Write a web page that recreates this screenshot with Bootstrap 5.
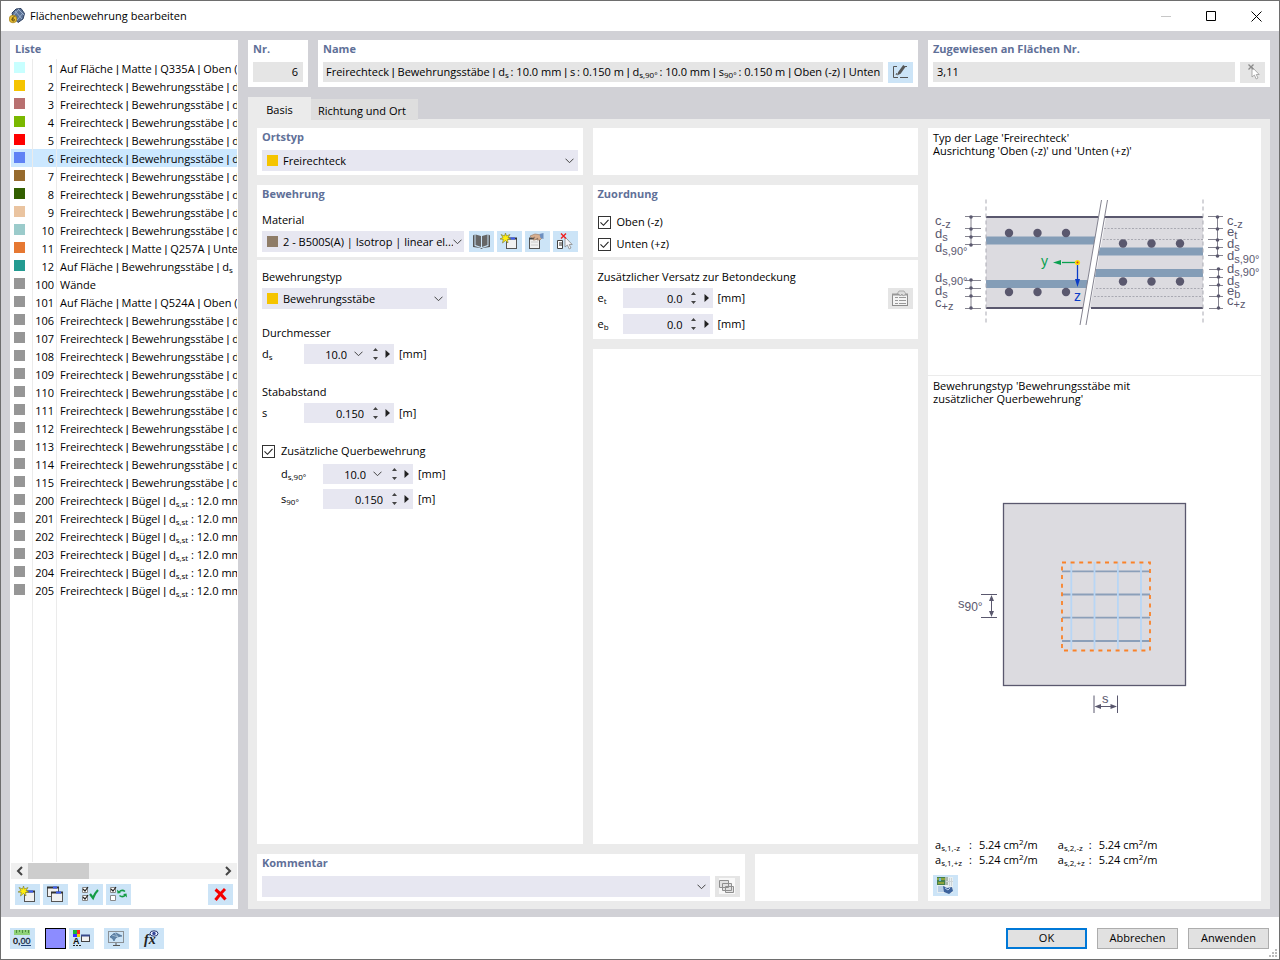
<!DOCTYPE html>
<html lang="de">
<head>
<meta charset="utf-8">
<meta name="viewport" content="width=device-width, initial-scale=1">
<title>Flächenbewehrung bearbeiten</title>
<link href="https://cdn.jsdelivr.net/npm/bootstrap@5.3.0/dist/css/bootstrap.min.css" rel="stylesheet">
<style>
:root { --field: #e7e7f1; --gray: #e5e5e5; --frame: #d1d1d6; --page: #ebebeb; --tool: #cce4f7; --head: #5f7098; }
body { font: 11px/16px "Open Sans", "Noto Sans", sans-serif; color: #000; background: #fff; }
.dialog { min-height: 100vh; border: 1px solid #6e6e6e; }
.titlebar { height: 30px; gap: 5px; }
.titlebar .btn { width: 45px; height: 30px; }
.titlebar .btn + .btn { margin-left: -5px; }
.workspace { background: var(--frame); padding: 9px 9px 8px; gap: 10px; min-height: 0; }
.list-pane { width: 228px; flex: none; }
.pane { background: #fff; padding: 1px 5px 4px; }
.pane-form { padding-bottom: 5px; }
.pane-sub { background: #fff; padding: 9px 5px 5px; }
.heading { font-size: 11px; line-height: 16px; font-weight: 700; color: var(--head); margin: 0; }
.caption { font-size: 11px; line-height: 16px; font-weight: 400; margin-bottom: 3px; }
.btn { border-radius: 0; padding: 0; border: 0; font-size: 11px; line-height: 16px; }
.tool { width: 25px; height: 21px; background: var(--tool); flex: none; display: block; }
.tool:disabled { background: var(--gray); opacity: 1; border: 0; }
.tool svg, .titlebar .btn svg { display: block; margin: auto; }
.gray-field { background: var(--gray); border: 0; height: 20px; line-height: 20px; min-width: 0; overflow: hidden; white-space: nowrap; }
sub { font-size: 8px; bottom: -2px; line-height: 0; }
sup { font-size: 8px; line-height: 0; }
.pipe { font-family: "Liberation Sans", sans-serif; }

.items { width: 100%; height: 100%; table-layout: fixed; border-collapse: separate; border-spacing: 0; }
.items td { height: 18px; padding: 0; line-height: 16px; vertical-align: bottom; white-space: nowrap; overflow: hidden; border-right: 1px solid #ebebeb; }
.items td:last-child { border: 0; padding-left: 3px; }
.items td:nth-child(2) { text-align: right; padding-right: 2px; }
.items .filler td { height: auto; }
.items .chosen td { background: #cce8ff; }
.dot { display: block; width: 11px; height: 11px; margin: 0 0 4px 3px; }
.c-dot { width: 22px; } .c-no { width: 24px; }
.list-pane .heading { padding: 1px 5px 2px; }
.list-body { margin: 0 1px; }
.list-tools { gap: 3px; padding: 5px 5px 4px; }
.list-tools .second { margin-left: 7px; }
.scroller { height: 16px; margin: 1px 1px 0; background: #f0f0f0; }
.scroller .btn { width: 17px; height: 16px; }
.thumb { width: 61px; background: #cdcdcd; }

.tabs { height: 22px; }
.tabs .nav-link { position: relative; z-index: 1; border: 0; border-radius: 0; padding: 2px 9px 0 7px; height: 21px; margin-top: 2px; background: #dedede; color: #000; line-height: 16px; min-width: 107px; text-align: left; }
.tabs .nav-link.active { background: var(--page); padding: 4px 0 0; width: 63px; min-width: 0; text-align: center; height: 22px; margin-top: 0; }
.sheet { background: var(--page); padding: 9px 9px 8px; gap: 10px; min-height: 0; }
.side-top { width: 342px; flex: none; }
.side { width: 333px; flex: none; background: #fff; }
.split { display: grid; grid-template-columns: minmax(0, 1fr) minmax(0, 1fr); gap: 10px; }
.split-foot { display: grid; grid-template-columns: minmax(0, 3fr) minmax(0, 1fr); gap: 10px; }
.g-s { gap: 3px; } .g-m { gap: 5px; } .g-n { gap: 6px; } .g-l { gap: 10px; }
.below-s { margin-bottom: 3px; } .below-m { margin-bottom: 5px; } .below-l { margin-bottom: 10px; } .below-xl { margin-bottom: 12px; }
.above-m { margin-top: 5px; } .above-l { margin-top: 16px; } .above-xl { margin-top: 20px; }
.pad-x { padding-left: 5px; padding-right: 5px; }

.combo { background: var(--field); height: 21px; padding-left: 5px; gap: 5px; min-width: 0; }
.combo i { width: 11px; height: 11px; flex: none; }
.combo select { appearance: none; border: 0; background: transparent url("data:image/svg+xml,%3Csvg xmlns='http://www.w3.org/2000/svg' width='9' height='6'%3E%3Cpath d='M.5.7l4 4 4-4' fill='none' stroke='%23444'/%3E%3C/svg%3E") no-repeat right 4px center; flex: 1 1 0; min-width: 0; height: 21px; padding: 0 11px 0 0; color: #000; }
.mat-combo select { background-position: right 2px center; }
.c-yellow { background: #f5c400; } .c-brown { background: #8f7d68; }
.nr-pane { width: 60px; flex: none; } .name-field { padding-left: 3px; } .type-combo { width: 185px; } .mat-combo { margin-right: 2px; }
.number { background: var(--field); width: 90px; height: 20px; flex: none; padding-right: 1px; }
.number input { flex: 1 1 0; min-width: 0; border: 0; background: none; text-align: right; padding: 1px 0 0; height: 20px; }
.number button { border: 0; background: none; padding: 0; height: 20px; display: block; }
.number svg { display: block; margin: auto; }
.number .drop { width: 16px; margin: 0 2px 0 3px; }
.number .spin { width: 14px; margin-left: 4px; }
.number .drop + .spin { margin-left: 0; }
.number .more { width: 11px; }
.wide-label { width: 42px; } .slim-label { width: 25px; }
.indent { padding-left: 19px; }
.check-row { gap: 6px; height: 16px; }
.form-check-input.box { width: 13px; height: 13px; margin: 0; border: 1px solid #333; border-radius: 0; background: #fff; box-shadow: none; }
.form-check-input.box:checked { background: #fff url("data:image/svg+xml,%3Csvg xmlns='http://www.w3.org/2000/svg' viewBox='0 0 11 11'%3E%3Cpath d='M1.5 5.3l3 3 5-5.5' fill='none' stroke='%23222' stroke-width='1.1'/%3E%3C/svg%3E") center/11px; }
.note { line-height: 13px; padding: 3px 5px 0; margin: 0; }
.upper { min-height: 248px; border-bottom: 1px solid #ebebeb; }
.figure-box { flex: 1 1 0; min-height: 0; }
.figure-box svg { display: block; flex: none; }
.side-foot { padding: 0 5px 5px; }
.results { line-height: 15px; width: auto; margin-bottom: 8px; }
.results td, .results th { padding: 0 7px 0 0; font-weight: 400; }
.results th { min-width: 36px; padding-left: 2px; padding-right: 4px; }
.results td + th { padding-left: 13px; }
.footer-bar { min-height: 42px; padding: 0 10px 0 9px; }
.color-box { width: 21px; height: 21px; border: 1px solid #000; background: #8c8cff; padding: 0; }
.action { width: 81px; height: 21px; background: #e1e1e1; border: 1px solid #adadad; color: #000; }
.action.default { border: 2px solid #0078d7; }
.grip { position: absolute; right: 2px; bottom: 2px; }
</style>
</head>
<body>
<svg width="0" height="0" class="position-absolute" aria-hidden="true">
  <symbol id="i-new" viewBox="0 0 25 21">
    <rect x="9.500" y="7.500" width="10" height="10" fill="#f1f1f1" stroke="#555"/><path d="M9 7.500h11" stroke="#333" stroke-width="2"/><path d="M13 7.500h5" stroke="#3c5cf0" stroke-width="2"/>
    <path d="M8.500 2l1 3 3.500-1.500-2 3 3 1.500-3.500.5.5 3.500-2.500-2.500-3 2.500.8-3.600L3 8l3-1.500L4 3.500 7.500 5z" fill="#ffee10" stroke="#77752a" stroke-width=".6"/>
  </symbol>
  <symbol id="i-copy" viewBox="0 0 25 21">
    <rect x="4.500" y="3.500" width="11" height="9" fill="#f1f1f1" stroke="#555"/><path d="M4 3.500h12" stroke="#333" stroke-width="2"/><path d="M10 3.500h4" stroke="#3c5cf0" stroke-width="2"/>
    <rect x="8.500" y="8.500" width="11" height="9" fill="#f1f1f1" stroke="#555"/><path d="M8 8.500h12" stroke="#333" stroke-width="2"/><path d="M13 8.500h5" stroke="#3c5cf0" stroke-width="2"/>
  </symbol>
  <symbol id="i-allcheck" viewBox="0 0 25 21">
    <path d="M4.500 3.500h5v5h-5zM4.500 11.500h5v5h-5z" fill="#fff" stroke="#888"/><path d="M5 5l2 2 3-4M5 13l2 2 3-4" fill="none" stroke="#222" stroke-width="1.200"/>
    <path d="M12 10l3 4q2-5 5-8" fill="none" stroke="#159c45" stroke-width="2.200"/>
  </symbol>
  <symbol id="i-swap" viewBox="0 0 25 21">
    <path d="M4.500 3.500h5v5h-5zM4.500 11.500h5v5h-5z" fill="#fff" stroke="#888"/><path d="M5 5l2 2 3-4" fill="none" stroke="#222" stroke-width="1.200"/>
    <path d="M13 8q3-3 6-.5M19.500 11q-3 3-6 .5" fill="none" stroke="#159c45" stroke-width="1.600"/><path d="M11 5.500l.5 4 3.500-.5zM21 13.500l-.5-4-3.500.5z" fill="#159c45"/>
  </symbol>
  <symbol id="i-delete" viewBox="0 0 25 21"><path d="M7.500 5.500q5 4 10 10M17 5q-5 5-9.500 11" fill="none" stroke="#f50000" stroke-width="3"/></symbol>
  <symbol id="i-book" viewBox="0 0 25 21">
    <path d="M4 4.500l1.500-1v11.500L12 17h1l6.500-2V3.500l1.500 1V16l-7 1-1.500 1L11 17l-7-1z" fill="#555"/><path d="M6.500 3.500l5.500 1.500v11l-5.500-2zM18.500 3.500L13 5v11l5.500-2z" fill="#666"/><path d="M12.500 4v13" stroke="#cce4f7"/>
  </symbol>
  <symbol id="i-edit" viewBox="0 0 25 21">
    <rect x="4.500" y="7.500" width="10" height="10" fill="#f1f1f1" stroke="#555"/><path d="M4 7.500h11" stroke="#444" stroke-width="2"/><path d="M5 5l5-2 6 1 1 3-2 2h-3l1-2-3 2H8l2-3-3 1z" fill="#d8af90" stroke="#96755f" stroke-width=".6"/><path d="M14.500 3l4-1v6l-3-1z" fill="#6c8fc0"/><path d="M6 11h7M6 14h7" stroke="#ccc"/>
  </symbol>
  <symbol id="i-edit-off" viewBox="0 0 25 21">
    <rect x="4.500" y="6.500" width="15" height="11" fill="#f4f4f4" stroke="#8d8d8d"/><path d="M4 6.500h16" stroke="#999" stroke-width="2"/><path d="M7 9.500h3M11 9.500h7M7 12.500h3M11 12.500h7M7 15.500h3M11 15.500h7" stroke="#999"/><path d="M9 6l2-3 5 0 2 3-3 2-1-2-2 2-1-2z" fill="#ddd" stroke="#999" stroke-width=".7"/>
  </symbol>
  <symbol id="i-pick" viewBox="0 0 25 21">
    <path d="M4.500 9.500h5v8h-5z" fill="#fff" stroke="#444"/><path d="M6 12h3M6 14h3" stroke="#333"/><path d="M12 6v10l2.400-2 1.800 4 1.800-1-1.800-3.500h3z" fill="#f6f6fa" stroke="#888" stroke-width=".8"/><path d="M8 2.500l5 5M13 2.500l-5 5" stroke="#ef2020" stroke-width="1.400"/>
  </symbol>
  <symbol id="i-pick-off" viewBox="0 0 25 21">
    <path d="M12 5v10l2.400-2 1.800 4 1.800-1-1.800-3.500h3z" fill="#fff" stroke="#999" stroke-width=".8"/><path d="M8.500 2.500l5 5M13.500 2.500l-5 5" stroke="#8a8a8a" stroke-width="1.300"/>
  </symbol>
  <symbol id="i-pencil" viewBox="0 0 25 21">
    <path d="M9 4.500H5.500v11H10M12 15.500h8M17 4.500h2M8 13l1-2" fill="none" stroke="#555"/><path d="M9 13.500l1.200-3.500 5-7 2.400 1.700-5 7z" fill="#555"/>
  </symbol>
  <symbol id="i-cards" viewBox="0 0 25 21">
    <rect x="4" y="2" width="16" height="16" fill="#f8f8f8"/><path d="M4.500 4.500h9v7h-9zM7.500 7.500h9v7h-9zM10.500 10.500h8v6h-8z" fill="#e2e2e2" stroke="#8f8f8f"/>
  </symbol>
  <symbol id="i-picture" viewBox="0 0 25 21">
    <path d="M4 2h16v16H4z" fill="#e6eef2"/><path d="M4 2h8v8H4z" fill="#45804a"/><path d="M4 4h8M5 8h6" stroke="#d7c82e"/><path d="M7 3v3" stroke="#75b8df" stroke-width="2"/><path d="M12 2h3v8h-3z" fill="#a9b9ae"/><path d="M16.500 3v8M18.500 3v8M13 6.500h7" stroke="#cdd4d6"/><path d="M5 11h7v6H5z" fill="#b7cee6"/><path d="M10 11l4 2 5-1 1 4-4 3-5-2z" fill="#3c629c"/><path d="M12 13l3 2 2-2" stroke="#b8cce8" fill="none"/>
  </symbol>
  <symbol id="i-display" viewBox="0 0 25 21">
    <rect x="4.500" y="3.500" width="15" height="11" fill="none" stroke="#8a9096"/><path d="M12 15v3M9 17.500h7" stroke="#555"/><path d="M6 9q3-4 6-4l6 3-5 1q-2 1-3 4-1-3-4-4z" fill="#5f84a9" stroke="#3e6288" stroke-width=".6"/><path d="M8 7l6 2M11 5l3 4" stroke="#b8cde0" stroke-width=".7"/>
  </symbol>
  <symbol id="s-drop" viewBox="0 0 9 6"><path d="M.5.7l4 4 4-4" fill="none" stroke="#444"/></symbol>
  <symbol id="s-spin" viewBox="0 0 5 14"><path d="M0 4l2.500-3L5 4zM0 10h5l-2.500 3z" fill="#444"/></symbol>
  <symbol id="s-more" viewBox="0 0 5 8"><path d="M.5 0v8L5 4z" fill="#222"/></symbol>
</svg>

<main class="dialog d-flex flex-column position-relative">
  <header class="titlebar d-flex align-items-center ps-2">
    <svg width="16" height="16" class="flex-shrink-0" viewBox="0 0 16 16" aria-hidden="true"><path d="M3 5l4-4 5-.5 3.500 5L14 11l-5 3.500L4 9z" fill="#5c7295" stroke="#2c3f60"/><path d="M6 3l7 8M9 1l6 6M4 8l6-7M8 12l6-7" stroke="#a8bedb" stroke-width=".8"/><circle cx="4" cy="11" r="3.800" fill="#e6bd35" stroke="#9d7a13" stroke-width=".7"/><path d="M5.500 8.500Q3 9 3 11.500q0 1.500 1.200 1.500t1.200-1.200q0-1-1.200-1-1 0-1.200 1" fill="none" stroke="#5c470b"/></svg>
    <span class="me-auto">Flächenbewehrung bearbeiten</span>
    <button class="btn" disabled aria-label="Minimieren"><svg width="11" height="11"><path d="M0 5.500h10" stroke="#aaa"/></svg></button>
    <button class="btn" aria-label="Maximieren"><svg width="11" height="11"><path d="M.5.5h9v9h-9z" fill="none" stroke="#000"/></svg></button>
    <button class="btn" aria-label="Schließen"><svg width="11" height="11"><path d="M.5.5l10 10M10.500.5l-10 10" stroke="#000"/></svg></button>
  </header>

  <div class="workspace d-flex flex-grow-1">
    <aside class="list-pane bg-white d-flex flex-column">
      <h2 class="heading">Liste</h2>
      <div class="list-body flex-grow-1 overflow-hidden">
        <table class="items" aria-label="Liste">
          <colgroup><col class="c-dot"><col class="c-no"><col></colgroup>
          <tbody id="rows"></tbody>
        </table>
      </div>
      <div class="scroller d-flex">
        <button class="btn" aria-label="Nach links"><svg width="7" height="10" class="d-block m-auto"><path d="M6 1L2 5l4 4" fill="none" stroke="#444" stroke-width="2"/></svg></button>
        <div class="thumb me-auto"></div>
        <button class="btn" aria-label="Nach rechts"><svg width="7" height="10" class="d-block m-auto"><path d="M1 1l4 4-4 4" fill="none" stroke="#444" stroke-width="2"/></svg></button>
      </div>
      <div class="list-tools d-flex">
        <button class="btn tool" aria-label="Neu"><svg width="25" height="21"><use href="#i-new"/></svg></button>
        <button class="btn tool" aria-label="Kopieren"><svg width="25" height="21"><use href="#i-copy"/></svg></button>
        <button class="btn tool second" aria-label="Alle auswählen"><svg width="25" height="21"><use href="#i-allcheck"/></svg></button>
        <button class="btn tool" aria-label="Auswahl umkehren"><svg width="25" height="21"><use href="#i-swap"/></svg></button>
        <button class="btn tool ms-auto" aria-label="Löschen"><svg width="25" height="21"><use href="#i-delete"/></svg></button>
      </div>
    </aside>

    <section class="d-flex flex-column flex-grow-1 overflow-hidden">
      <div class="d-flex g-l below-l">
        <div class="pane nr-pane">
          <label class="heading d-block" for="nr">Nr.</label>
          <input id="nr" class="gray-field d-block w-100 text-end above-m pad-x" value="6" readonly>
        </div>
        <div class="pane flex-grow-1 overflow-hidden">
          <h2 class="heading" id="lname">Name</h2>
          <div class="d-flex g-m above-m">
            <div class="gray-field flex-grow-1 name-field" role="textbox" aria-readonly="true" aria-labelledby="lname">Freirechteck <span class="pipe">|</span> Bewehrungsstäbe <span class="pipe">|</span> d<sub>s</sub>&thinsp;: 10.0 mm <span class="pipe">|</span> s&thinsp;: 0.150 m <span class="pipe">|</span> d<sub>s,90°</sub>&thinsp;: 10.0 mm <span class="pipe">|</span> s<sub>90°</sub>&thinsp;: 0.150 m <span class="pipe">|</span> Oben (-z) <span class="pipe">|</span> Unten</div>
            <button class="btn tool" aria-label="Name bearbeiten"><svg width="25" height="21"><use href="#i-pencil"/></svg></button>
          </div>
        </div>
        <div class="pane side-top">
          <label class="heading d-block" for="zug">Zugewiesen an Flächen Nr.</label>
          <div class="d-flex g-m above-m">
            <input id="zug" class="gray-field flex-grow-1 ps-1" value="3,11" readonly>
            <button class="btn tool" disabled aria-label="Flächen auswählen"><svg width="25" height="21"><use href="#i-pick-off"/></svg></button>
          </div>
        </div>
      </div>

      <nav class="nav tabs" role="tablist">
        <button class="nav-link active" role="tab" aria-selected="true">Basis</button>
        <button class="nav-link" role="tab" aria-selected="false">Richtung und Ort</button>
      </nav>

      <div class="sheet d-flex flex-grow-1">
        <div class="d-flex flex-column flex-grow-1 g-l overflow-hidden">
          <div class="split">
            <div class="pane">
              <label class="heading d-block" for="ort">Ortstyp</label>
              <div class="combo d-flex align-items-center above-m"><i class="c-yellow"></i><select id="ort"><option>Freirechteck</option></select></div>
            </div>
            <div class="pane"></div>
          </div>

          <div class="split flex-grow-1">
            <div class="d-flex flex-column g-s">
              <div class="pane pane-form">
                <h2 class="heading below-l">Bewehrung</h2>
                <label class="d-block below-s" for="mat">Material</label>
                <div class="d-flex g-s">
                  <div class="combo mat-combo flex-grow-1 d-flex align-items-center"><i class="c-brown"></i><select id="mat"><option>2 - B500S(A) | Isotrop | linear el...</option></select></div>
                  <button class="btn tool" aria-label="Bibliothek"><svg width="25" height="21"><use href="#i-book"/></svg></button>
                  <button class="btn tool" aria-label="Neues Material"><svg width="25" height="21"><use href="#i-new"/></svg></button>
                  <button class="btn tool" aria-label="Material bearbeiten"><svg width="25" height="21"><use href="#i-edit"/></svg></button>
                  <button class="btn tool" aria-label="Material wählen"><svg width="25" height="21"><use href="#i-pick"/></svg></button>
                </div>
              </div>
              <div class="pane-sub flex-grow-1">
                <label class="d-block below-s" for="typ">Bewehrungstyp</label>
                <div class="combo type-combo d-flex align-items-center"><i class="c-yellow"></i><select id="typ"><option>Bewehrungsstäbe</option></select></div>

                <h3 class="caption above-l">Durchmesser</h3>
                <div class="d-flex align-items-center g-m">
                  <div class="d-flex align-items-center"><label class="wide-label" for="ds">d<sub>s</sub></label>
                  <div class="number d-flex"><input id="ds" value="10.0"><button class="drop" aria-label="Liste öffnen"><svg width="9" height="6"><use href="#s-drop"/></svg></button><button class="spin" aria-label="Ändern"><svg width="5" height="14"><use href="#s-spin"/></svg></button><button class="more" aria-label="Mehr"><svg width="5" height="8"><use href="#s-more"/></svg></button></div></div>
                  <span>[mm]</span>
                </div>

                <h3 class="caption above-xl">Stababstand</h3>
                <div class="d-flex align-items-center g-m">
                  <div class="d-flex align-items-center"><label class="wide-label" for="s">s</label>
                  <div class="number d-flex"><input id="s" value="0.150"><button class="spin" aria-label="Ändern"><svg width="5" height="14"><use href="#s-spin"/></svg></button><button class="more" aria-label="Mehr"><svg width="5" height="8"><use href="#s-more"/></svg></button></div></div>
                  <span>[m]</span>
                </div>

                <div class="check-row d-flex align-items-center above-xl below-m"><input class="form-check-input box" type="checkbox" id="quer" checked><label for="quer">Zusätzliche Querbewehrung</label></div>
                <div class="indent d-flex align-items-center g-m below-m">
                  <div class="d-flex align-items-center"><label class="wide-label" for="ds90">d<sub>s,90°</sub></label>
                  <div class="number d-flex"><input id="ds90" value="10.0"><button class="drop" aria-label="Liste öffnen"><svg width="9" height="6"><use href="#s-drop"/></svg></button><button class="spin" aria-label="Ändern"><svg width="5" height="14"><use href="#s-spin"/></svg></button><button class="more" aria-label="Mehr"><svg width="5" height="8"><use href="#s-more"/></svg></button></div></div>
                  <span>[mm]</span>
                </div>
                <div class="indent d-flex align-items-center g-m">
                  <div class="d-flex align-items-center"><label class="wide-label" for="s90">s<sub>90°</sub></label>
                  <div class="number d-flex"><input id="s90" value="0.150"><button class="spin" aria-label="Ändern"><svg width="5" height="14"><use href="#s-spin"/></svg></button><button class="more" aria-label="Mehr"><svg width="5" height="8"><use href="#s-more"/></svg></button></div></div>
                  <span>[m]</span>
                </div>
              </div>
            </div>

            <div class="d-flex flex-column g-l">
              <div class="d-flex flex-column g-s">
                <div class="pane pane-form">
                  <h2 class="heading below-xl">Zuordnung</h2>
                  <div class="d-flex flex-column g-n">
                    <div class="check-row d-flex align-items-center"><input class="form-check-input box" type="checkbox" id="oben" checked><label for="oben">Oben (-z)</label></div>
                    <div class="check-row d-flex align-items-center"><input class="form-check-input box" type="checkbox" id="unten" checked><label for="unten">Unten (+z)</label></div>
                  </div>
                </div>
                <div class="pane-sub">
                  <h3 class="caption">Zusätzlicher Versatz zur Betondeckung</h3>
                  <div class="d-flex justify-content-between">
                    <div class="d-flex flex-column g-n">
                      <div class="d-flex align-items-center g-m">
                        <div class="d-flex align-items-center"><label class="slim-label" for="et">e<sub>t</sub></label>
                        <div class="number d-flex"><input id="et" value="0.0"><button class="spin" aria-label="Ändern"><svg width="5" height="14"><use href="#s-spin"/></svg></button><button class="more" aria-label="Mehr"><svg width="5" height="8"><use href="#s-more"/></svg></button></div></div>
                        <span>[mm]</span>
                      </div>
                      <div class="d-flex align-items-center g-m">
                        <div class="d-flex align-items-center"><label class="slim-label" for="eb">e<sub>b</sub></label>
                        <div class="number d-flex"><input id="eb" value="0.0"><button class="spin" aria-label="Ändern"><svg width="5" height="14"><use href="#s-spin"/></svg></button><button class="more" aria-label="Mehr"><svg width="5" height="8"><use href="#s-more"/></svg></button></div></div>
                        <span>[mm]</span>
                      </div>
                    </div>
                    <button class="btn tool" disabled aria-label="Versatz bearbeiten"><svg width="25" height="21"><use href="#i-edit-off"/></svg></button>
                  </div>
                </div>
              </div>
              <div class="bg-white flex-grow-1"></div>
            </div>
          </div>

          <div class="split-foot">
            <div class="pane">
              <label class="heading d-block" for="kom">Kommentar</label>
              <div class="d-flex g-m above-m">
                <div class="combo flex-grow-1 d-flex"><select id="kom"><option></option></select></div>
                <button class="btn tool" disabled aria-label="Kommentare"><svg width="25" height="21"><use href="#i-cards"/></svg></button>
              </div>
            </div>
            <div class="pane"></div>
          </div>
        </div>

        <div class="side d-flex flex-column">
          <div class="upper d-flex flex-column">
            <p class="note">Typ der Lage 'Freirechteck'<br>Ausrichtung 'Oben (-z)' und 'Unten (+z)'</p>
            <div class="figure-box d-flex align-items-center justify-content-center">
              <svg width="333" height="138" viewBox="928 197 333 138" font-family="Liberation Sans, sans-serif" font-size="13" fill="#5a586e" role="img" aria-label="Schnitt durch die Platte">
                <path d="M986 217h113l-16 91H986zM1106 217h97v91H1090z" fill="#dcdbe0"/>
                <path d="M986 236.500h110l-1 8H986zM986 280h103l-2 8H986zM1100 247.500h103v8h-105zM1096 269h107v8h-108z" fill="#849db7"/>
                <path d="M986 217h113M1105 217h98M986 308h99M1091 308h112" stroke="#5a586e" stroke-width="2"/>
                <path d="M986 199.500V325M1203 199.500V325" stroke="#a9a9b2" stroke-dasharray="4 3"/>
                <path d="M1104 228.500h99M1103 239.500h100M1096 288.500h107M1094 296.500h109" stroke="#a9a9b2" stroke-dasharray="2 1.500"/>
                <path d="M1101.500 200h6L1086 325h-6z" fill="#fff"/>
                <path d="M1101.500 200L1080 325M1107.500 200L1086 325" stroke="#83828f"/>
                <g><circle cx="1009" cy="233" r="4.200"/><circle cx="1037.500" cy="233" r="4.200"/><circle cx="1066" cy="233" r="4.200"/><circle cx="1009" cy="292" r="4.200"/><circle cx="1037.500" cy="292" r="4.200"/><circle cx="1066" cy="292" r="4.200"/><circle cx="1123" cy="243.500" r="4.200"/><circle cx="1151.500" cy="243.500" r="4.200"/><circle cx="1180" cy="243.500" r="4.200"/><circle cx="1123" cy="281.500" r="4.200"/><circle cx="1151.500" cy="281.500" r="4.200"/><circle cx="1180" cy="281.500" r="4.200"/></g>
                <path d="M1077 262.500h-15" stroke="#0aa050" stroke-width="1.300"/><path d="M1053 262.500l8-2.500v5z" fill="#0aa050"/>
                <path d="M1077.500 263v16" stroke="#0a3cc8" stroke-width="1.300"/><path d="M1077.500 287l-2.500-8h5z" fill="#0a3cc8"/>
                <circle cx="1077.500" cy="262.500" r="2.600" fill="#ffdc00"/><circle cx="1077.500" cy="262.500" r="1" fill="#c33"/>
                <text x="1041" y="266" fill="#0aa050" font-size="14">y</text><text x="1074" y="301" fill="#0a3cc8" font-size="14">z</text>
                <path stroke="#85848f" d="M965 216.500h16M965 228.500h16M965 236.500h16M965 244.500h16M971 216v28M965 280.500h16M965 288.500h16M965 296.500h16M965 308.500h16M971 280v28M1208 216.500h15M1208 228.500h15M1208 239.500h15M1208 247.500h15M1208 255.500h15M1217.500 216v40M1209 269.500h14M1209 277.500h14M1209 285.500h14M1209 296.500h14M1209 308.500h14M1218.500 269v39"/>
                <g id="nodes"></g>
                <text x="935" y="225">c<tspan dy="3" font-size="11">-z</tspan></text><text x="935" y="238">d<tspan dy="3" font-size="11">s</tspan></text><text x="935" y="252">d<tspan dy="3" font-size="11">s,90°</tspan></text>
                <text x="935" y="282">d<tspan dy="3" font-size="11">s,90°</tspan></text><text x="935" y="295">d<tspan dy="3" font-size="11">s</tspan></text><text x="935" y="307">c<tspan dy="3" font-size="11">+z</tspan></text>
                <text x="1227" y="225">c<tspan dy="3" font-size="11">-z</tspan></text><text x="1227" y="236">e<tspan dy="3" font-size="11">t</tspan></text><text x="1227" y="248">d<tspan dy="3" font-size="11">s</tspan></text><text x="1227" y="260">d<tspan dy="3" font-size="11">s,90°</tspan></text>
                <text x="1227" y="273">d<tspan dy="3" font-size="11">s,90°</tspan></text><text x="1227" y="285">d<tspan dy="3" font-size="11">s</tspan></text><text x="1227" y="295">e<tspan dy="3" font-size="11">b</tspan></text><text x="1227" y="305">c<tspan dy="3" font-size="11">+z</tspan></text>
              </svg>
            </div>
          </div>
          <p class="note">Bewehrungstyp 'Bewehrungsstäbe mit<br>zusätzlicher Querbewehrung'</p>
          <div class="figure-box d-flex align-items-center justify-content-center">
            <svg width="333" height="258" viewBox="928 492 333 258" font-family="Liberation Sans, sans-serif" font-size="13" fill="#5a586e" role="img" aria-label="Bewehrungsstäbe mit Querbewehrung">
              <rect x="1003.500" y="503.500" width="182" height="182" fill="#dcdbe0" stroke="#5a586e" stroke-width="1.300"/>
              <path d="M1062 571.300h88M1062 594.500h88M1062 617.700h88M1062 641h88" stroke="#8b9fb9" stroke-width="1.800"/>
              <path d="M1071.300 562v88M1094.500 562v88M1117.900 562v88M1141 562v88" stroke="#b8d6f5" stroke-width="1.800"/>
              <rect x="1062" y="562.500" width="88" height="88" fill="none" stroke="#fa8228" stroke-width="1.800" stroke-dasharray="4 4.600"/>
              <path d="M981 594.500h16M981 617.500h16M991.500 598v16M1094 695.500V713M1117.500 695.500V713M1098 706.500h16" stroke="#5a586e" fill="none"/>
              <path d="M991.500 595l-2.500 6h5zM991.500 617l-2.500-6h5zM1094.500 706.500l6.500-2.500v5zM1117 706.500l-6.500-2.500v5z"/>
              <text x="958" y="608">s<tspan dy="3" font-size="12">90°</tspan></text><text x="1102" y="703">s</text>
            </svg>
          </div>
          <div class="side-foot">
            <table class="results">
              <tr><th>a<sub>s,1,-z</sub></th><td>:</td><td>5.24 cm<sup>2</sup>/m</td><th>a<sub>s,2,-z</sub></th><td>:</td><td>5.24 cm<sup>2</sup>/m</td></tr>
              <tr><th>a<sub>s,1,+z</sub></th><td>:</td><td>5.24 cm<sup>2</sup>/m</td><th>a<sub>s,2,+z</sub></th><td>:</td><td>5.24 cm<sup>2</sup>/m</td></tr>
            </table>
            <button class="btn tool" aria-label="Bild einstellen"><svg width="25" height="21"><use href="#i-picture"/></svg></button>
          </div>
        </div>
      </div>
    </section>
  </div>

  <footer class="footer-bar d-flex align-items-center g-l">
    <button class="btn tool" aria-label="Einheiten"><svg width="25" height="21">
      <path d="M4 2h16v5H4z" fill="#8ed178"/><path d="M6.500 2v3M9.500 2v2M12.500 2v3M15.500 2v2M18.500 2v3" stroke="#4f8e42"/>
      <text x="3" y="16" font-family="Liberation Sans" font-size="9" fill="#111" stroke="#111" stroke-width=".3">0,<tspan fill="#24467c">00</tspan></text><path d="M11 17.500h10" stroke="#24467c"/></svg></button>
    <div class="d-flex g-s">
      <button class="color-box" aria-label="Farbe"></button>
      <button class="btn tool" aria-label="Farben"><svg width="25" height="21">
        <path d="M4 2h4v4H4z" fill="#18b838"/><path d="M8 2h3v4H8z" fill="#f22"/><path d="M4 6h4v3H4z" fill="#33f"/><path d="M8 6h3v3H8z" fill="#eed800"/>
        <text x="4" y="16" font-family="Liberation Sans" font-weight="700" font-size="9" fill="#111">A</text><path d="M4 17.500h8" stroke="#222" stroke-dasharray="2 1"/><rect x="12.500" y="7.500" width="8" height="6" fill="#f1f1f1" stroke="#444"/><path d="M12 7.500h9" stroke="#384a8c" stroke-width="2"/></svg></button>
    </div>
    <button class="btn tool" aria-label="Anzeige"><svg width="25" height="21"><use href="#i-display"/></svg></button>
    <button class="btn tool" aria-label="Funktion"><svg width="25" height="21">
      <text x="5" y="16" font-family="Liberation Serif" font-style="italic" font-weight="700" font-size="14" fill="#222">fx</text>
      <ellipse cx="15" cy="5.500" rx="4" ry="2.700" fill="#e7edff" stroke="#2b3970"/><circle cx="15" cy="5.500" r="1.700" fill="#33459a"/></svg></button>
    <button class="btn action default ms-auto">OK</button>
    <button class="btn action">Abbrechen</button>
    <button class="btn action">Anwenden</button>
  </footer>
  <svg class="grip" width="8" height="8" aria-hidden="true"><path d="M6 0h2v2H6zM3 3h2v2H3zM6 3h2v2H6zM0 6h2v2H0zM3 6h2v2H3zM6 6h2v2H6z" fill="#bbb"/></svg>
</main>
<script src="https://cdn.jsdelivr.net/npm/bootstrap@5.3.0/dist/js/bootstrap.bundle.min.js"></script>
<script>
const bars = 'Freirechteck | Bewehrungsstäbe | d<sub>s</sub>';
const stirrup = 'Freirechteck | Bügel | d<sub>s,st</sub> : 12.0 mm';
const list = [
  [1, 'Auf Fläche | Matte | Q335A | Oben (-z)', '#c8ffff'], [2, bars, '#f5c400'], [3, bars, '#b87070'], [4, bars, '#7ab800'],
  [5, bars, '#ff0000'], [6, bars, '#5f82f5'], [7, bars, '#966a2d'], [8, bars, '#325f00'], [9, bars, '#eac4a0'], [10, bars, '#9bcbcb'],
  [11, 'Freirechteck | Matte | Q257A | Unten', '#e67832'], [12, 'Auf Fläche | Bewehrungsstäbe | d<sub>s</sub>', '#239b91'],
  [100, 'Wände'], [101, 'Auf Fläche | Matte | Q524A | Oben (-z)'],
  ...[106, 107, 108, 109, 110, 111, 112, 113, 114, 115].map(n => [n, bars]),
  ...[200, 201, 202, 203, 204, 205].map(n => [n, stirrup])
];
document.getElementById('rows').innerHTML = list.map(([n, text, color = '#969696']) =>
  `<tr${n === 6 ? ' class="chosen"' : ''}><td><span class="dot" style="background:${color}"></span></td><td>${n}</td><td>${text.replaceAll('|', '<span class="pipe">|</span>')}</td></tr>`
).join('') + '<tr class="filler"><td></td><td></td><td></td></tr>';
const nodes = [[971, [217, 229, 237, 245, 280, 288, 296, 308]], [1217.5, [217, 229, 240, 248, 256]], [1218.5, [269, 277, 285, 296, 308]]];
document.getElementById('nodes').innerHTML = nodes.flatMap(([x, ys]) => ys.map(y => `<circle cx="${x}" cy="${y}" r="1.8"/>`)).join('');
</script>
</body>
</html>
